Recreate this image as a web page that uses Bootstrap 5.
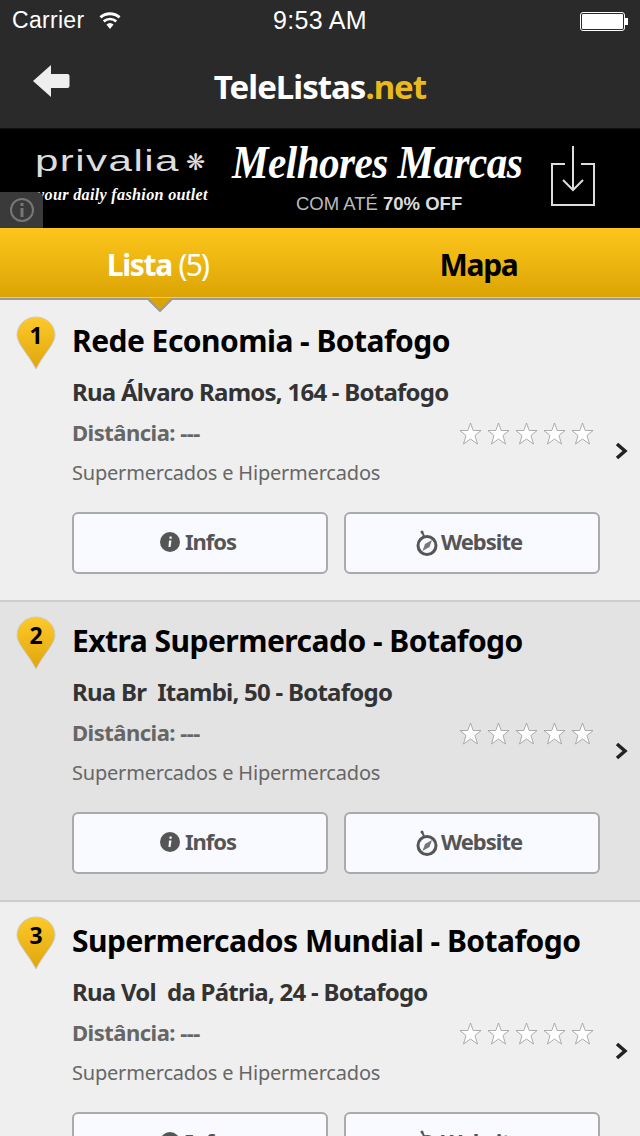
<!DOCTYPE html>
<html lang="en">
<head>
<meta charset="utf-8">
<link rel="stylesheet" href="https://cdn.jsdelivr.net/npm/bootstrap@5.3.0/dist/css/bootstrap.min.css">
<style>
html, body { margin: 0; height: 1136px; overflow: hidden; }
body { width: 640px; background: #efefef; font-family: "Noto Sans", "Open Sans", sans-serif; color: #000; }
.topbar { height: 129px; background: #2a2a2a; border-bottom: 1px solid #111; }
.statusbar { height: 40px; padding: 0 12px; color: #fff; font-family: "Liberation Sans", sans-serif; font-size: 23px; letter-spacing: .3px; }
.status-time { left: 0; right: 0; top: 0; line-height: 40px; text-align: center; font-size: 25px; }
.wifi-icon { margin-left: 13px; }
.battery-wrap { margin-top: 2px; }
.battery { width: 45px; height: 19px; border: 1px solid #fff; border-radius: 3px; padding: 1px; }
.battery i { display: block; height: 100%; background: #fff; border-radius: 1px; }
.battery-tip { width: 3px; height: 7px; background: #fff; }
.navrow { height: 88px; }
.back-icon { left: 32px; top: 24px; }
.brand-title { font-size: 33px; font-weight: 700; letter-spacing: -1px; line-height: 1; padding-top: 4px; color: #fff; }
.brand-title span { color: #e9b91d; }
.adbar { height: 99px; background: #000; color: #fff; }
.ad-info { left: 0; bottom: 0; width: 43px; height: 36px; background: #3a3a3a; border-top-right-radius: 6px; }
.ad-logo { left: 35px; top: 18px; font-size: 29px; letter-spacing: 1px; line-height: 1; color: #ddd; font-family: "Liberation Sans", sans-serif; white-space: nowrap; transform: scaleX(1.45); transform-origin: left top; }
.ad-star { left: 186px; top: 21px; font-size: 23px; line-height: 1; color: #ddd; }
.ad-tag { left: 37px; top: 58px; font-family: "Liberation Serif", serif; font-style: italic; font-weight: 700; font-size: 16.200px; letter-spacing: .3px; line-height: 1; white-space: nowrap; }
.ad-head { left: 232px; top: 10px; font-family: "Liberation Serif", serif; font-style: italic; font-weight: 700; font-size: 47px; line-height: 1; white-space: nowrap; letter-spacing: -.6px; transform: scaleX(.875); transform-origin: left top; }
.ad-sub { left: 296px; top: 66px; font-family: "Liberation Sans", sans-serif; font-size: 18.500px; line-height: 1; color: #bbb; white-space: nowrap; }
.ad-sub b { color: #ddd; }
.ad-dl { left: 550px; top: 17px; }
.tabbar { height: 72px; background: linear-gradient(#fdc61c, #dba404); border-bottom: 2px solid #999; box-shadow: inset 0 -1px 0 #f2cc55; }
.tab-item { flex: 1 1 50%; text-align: center; font-size: 30px; font-weight: 700; letter-spacing: -1.300px; line-height: 74px; padding-right: 3px; }
.tab-on { color: #fff; padding-right: 5px; }
.tab-on span { font-weight: 400; letter-spacing: -1.800px; }
.tab-caret { left: 146px; top: 70px; z-index: 2; }
.place { height: 300px; padding: 18px 40px 0 72px; background: #efefef; }
.place::after { content: ""; position: absolute; left: 0; right: 0; bottom: -2px; height: 2px; background: #cdcdcd; z-index: 1; }
.place-alt { background: #e3e3e3; }
.pin { left: 16px; top: 16px; }
.pin-num { left: 16px; top: 24px; width: 40px; text-align: center; font-size: 23px; font-weight: 700; line-height: 1; }
.place-name { font-size: 30px; font-weight: 700; letter-spacing: -.530px; line-height: 46px; margin: 0; white-space: nowrap; color: #000; }
.place-addr { font-size: 24px; font-weight: 700; letter-spacing: -.750px; line-height: 32px; margin: 12px 0 0; color: #333; white-space: pre; }
.place-dist { font-size: 22px; font-weight: 700; letter-spacing: -.500px; line-height: 32px; margin: 8px 0 0; color: #666; }
.place-cat { font-size: 20px; letter-spacing: -.2px; line-height: 30px; margin: 10px 0 0; color: #666; }
.stars { left: 460px; top: 122px; gap: 7px; }
.chev { right: 11px; top: 142px; }
.place-btns { margin: 24px -40px 0 0; width: 528px; gap: 16px; }
.place-btn { flex: 0 0 256px; height: 62px; background: #f9faff; border: 2px solid #aaa; border-radius: 6px; color: #555; font-size: 22px; font-weight: 700; letter-spacing: -1px; padding: 0 4px 3px 0; }
.place-btn-web { padding-right: 6px; }
.place-btn:hover { background: #f9faff; color: #555; border-color: #aaa; }
.btn-ico { flex: none; margin-right: 5px; }
.btn-ico-web { margin-top: 2px; margin-right: 3px; }
</style>
</head>
<body>
<div class="topbar">
  <div class="statusbar d-flex align-items-center position-relative">
    <span>Carrier</span>
    <svg class="wifi-icon" width="26" height="20" viewBox="0 0 24 20"><path d="M12 19l-3.600-4.400a5.400 5.400 0 0 1 7.200 0zM6.600 12.400L4.900 10.300a10.800 10.800 0 0 1 14.200 0l-1.700 2.100a8 8 0 0 0-10.800 0zM3.400 8.500L1.500 6.200a16 16 0 0 1 21 0l-1.900 2.300a13 13 0 0 0-17.200 0z" fill="#fff"/></svg>
    <div class="status-time position-absolute">9:53 AM</div>
    <div class="battery-wrap ms-auto d-flex align-items-center">
      <div class="battery"><i></i></div><div class="battery-tip"></div>
    </div>
  </div>
  <div class="navrow d-flex align-items-center justify-content-center position-relative">
    <svg class="back-icon position-absolute" width="38" height="34" viewBox="0 0 38 34"><path d="M19 1v9h16.500a2 2 0 0 1 2 2v10a2 2 0 0 1-2 2H19v9L1 17z" fill="#eee"/></svg>
    <div class="brand-title">TeleListas<span>.net</span></div>
  </div>
</div>
<div class="adbar position-relative overflow-hidden">
  <div class="ad-logo position-absolute">privalia</div>
  <div class="ad-star position-absolute">❋</div>
  <div class="ad-tag position-absolute">your daily fashion outlet</div>
  <div class="ad-head position-absolute">Melhores Marcas</div>
  <div class="ad-sub position-absolute">COM ATÉ <b>70% OFF</b></div>
  <svg class="ad-dl position-absolute" width="46" height="62" viewBox="0 0 46 62" fill="none" stroke="#ddd" stroke-width="2"><path d="M15 18H2v41h42V18H31"/><path d="M23 0v44M13 34l10 10 10-10"/></svg>
  <div class="ad-info position-absolute d-flex align-items-center justify-content-center">
    <svg width="26" height="26" viewBox="0 0 26 26"><circle cx="13" cy="13" r="11" fill="none" stroke="#777" stroke-width="2"/><path d="M11.500 11h3v9h-3zM11.500 6h3v3h-3z" fill="#777"/></svg>
  </div>
</div>
<div class="position-relative">
  <div class="tabbar d-flex">
    <div class="tab-item tab-on">Lista <span>(5)</span></div>
    <div class="tab-item">Mapa</div>
  </div>
  <svg class="tab-caret position-absolute" width="28" height="14" viewBox="0 0 28 14"><path d="M1 0l13 13L27 0" fill="#dba404" stroke="#999" stroke-width="2"/></svg>
</div>

<div id="places"></div>

<script>
var places = [
  { n: 1, name: 'Rede Economia - Botafogo', addr: 'Rua Álvaro Ramos, 164 - Botafogo' },
  { n: 2, name: 'Extra Supermercado - Botafogo', addr: 'Rua Br\u00a0\u00a0Itambi, 50 - Botafogo' },
  { n: 3, name: 'Supermercados Mundial - Botafogo', addr: 'Rua Vol\u00a0\u00a0da Pátria, 24 - Botafogo' }
];
var star = '<svg width="21" height="23" viewBox="0 0 21 23"><path d="M10.500 1l2.700 7.500H21l-6 5 2.500 8.500-7-5-7 5L6 13.500l-6-5h7.800z" fill="#fff" stroke="#999" stroke-width=".8"/></svg>';
var html = '';
places.forEach(function (p, i) {
  html += '<div class="place position-relative' + (i % 2 ? ' place-alt' : '') + '">' +
    '<svg class="pin position-absolute" width="40" height="54" viewBox="0 0 40 54"><defs><linearGradient id="pg' + i + '" x1="0" y1="0" x2="0" y2="1"><stop offset="0" stop-color="#fdc92a"/><stop offset="1" stop-color="#dfa60c"/></linearGradient></defs><path d="M20 1c10.500 0 19 8 19 18 0 9-10 17-19 34C11 36 1 28 1 19 1 9 9.500 1 20 1z" fill="url(#pg' + i + ')" stroke="#ccc" stroke-width="1"/></svg>' +
    '<div class="pin-num position-absolute">' + p.n + '</div>' +
    '<h2 class="place-name">' + p.name + '</h2>' +
    '<p class="place-addr">' + p.addr + '</p>' +
    '<p class="place-dist">Distância: ---</p>' +
    '<p class="place-cat">Supermercados e Hipermercados</p>' +
    '<div class="stars position-absolute d-flex">' + star + star + star + star + star + '</div>' +
    '<svg class="chev position-absolute" width="14" height="18" viewBox="0 0 14 18"><path d="M2 2l8 7-8 7" fill="none" stroke="#222" stroke-width="3.500"/></svg>' +
    '<div class="place-btns d-flex">' +
      '<button type="button" class="btn place-btn d-flex align-items-center justify-content-center"><svg class="btn-ico" width="20" height="20" viewBox="0 0 20 20"><circle cx="10" cy="10" r="10" fill="#555"/><path d="M9 8.500h2.500L10.500 15H8.500zM9.500 4.500h2.200v2.200H9.500z" fill="#f9faff"/></svg>Infos</button>' +
      '<button type="button" class="btn place-btn place-btn-web d-flex align-items-center justify-content-center"><svg class="btn-ico btn-ico-web" width="22" height="26" viewBox="0 0 22 26"><circle cx="11" cy="15.500" r="9" fill="none" stroke="#555" stroke-width="3"/><circle cx="6" cy="2" r="1.500" fill="#555"/><path d="M6 2l2 4" stroke="#555" stroke-width="2"/><path d="M16 10l-7 4-2.500 7 7-4z" fill="#777"/></svg>Website</button>' +
    '</div>' +
  '</div>';
});
document.getElementById('places').innerHTML = html;
</script>
<script src="https://cdn.jsdelivr.net/npm/bootstrap@5.3.0/dist/js/bootstrap.bundle.min.js"></script>
</body>
</html>
